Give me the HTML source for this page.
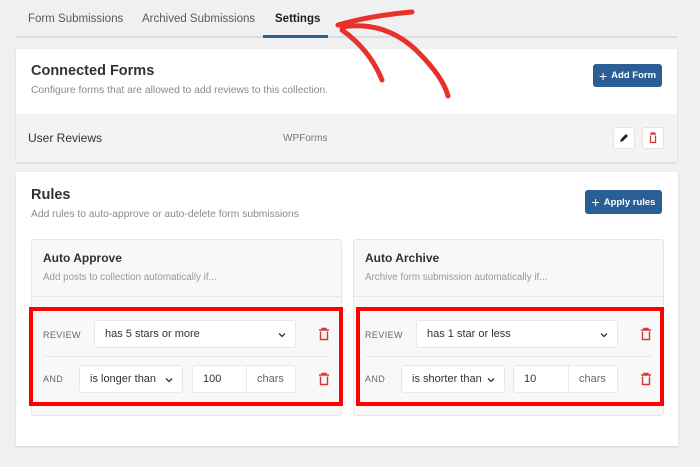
<!DOCTYPE html><html><head><style>
*{box-sizing:border-box;margin:0;padding:0}
body{width:700px;height:467px;background:#f0f0f1;font-family:"Liberation Sans",sans-serif;position:relative;overflow:hidden;color:#1e1e1e}
.a{position:absolute}
.tab{position:absolute;top:13px;font-size:11.5px;color:#5a5a5a}
.card{position:absolute;background:#fff;box-shadow:0 1px 2px rgba(0,0,0,.12)}
.h{font-size:14.5px;font-weight:bold;color:#2c3338}
.s{font-size:10.3px;color:#8a8a8a}
.btn{position:absolute;background:#2a5f95;color:#fff;font-size:9.5px;font-weight:bold;border-radius:3px;display:flex;align-items:center;justify-content:center;gap:4px}
.box{position:absolute;background:#f8f8f9;border:1px solid #e6e6e8;border-radius:3px}
.red{position:absolute;border:4px solid #f00}
.sel{position:absolute;background:#fff;border:1px solid #e8e8ea;border-radius:3px;font-size:11px;color:#333;display:flex;align-items:center;padding-left:10px}
.lbl{position:absolute;font-size:9px;color:#666;letter-spacing:.4px}
.chev{position:absolute;right:8px;top:9px}
.tr{position:absolute}
</style></head><body>
<div class="tab" style="left:28px">Form Submissions</div>
<div class="tab" style="left:142px">Archived Submissions</div>
<div class="tab" style="left:275px;color:#1e1e1e;font-weight:bold">Settings</div>
<div class="a" style="left:16px;top:36px;width:661px;height:2px;background:#dcdcde"></div>
<div class="a" style="left:263px;top:35px;width:65px;height:3px;background:#2a5f95"></div>

<div class="card" style="left:16px;top:49px;width:661px;height:113px">
 <div class="a h" style="left:15px;top:14px">Connected Forms</div>
 <div class="a s" style="left:15px;top:36px">Configure forms that are allowed to add reviews to this collection.</div>
 <div class="btn" style="left:577px;top:15px;width:69px;height:23px"><span style="font-size:14px;font-weight:normal">+</span>Add Form</div>
 <div class="a" style="left:0;top:65px;width:661px;height:48px;background:#f3f3f4"></div>
 <div class="a" style="left:12px;top:82px;font-size:12px;color:#2c3338">User Reviews</div>
 <div class="a" style="left:267px;top:84px;font-size:10px;color:#777">WPForms</div>
 <div class="a" style="left:597px;top:78px;width:22px;height:22px;background:#fff;border:1px solid #e5e5e5;border-radius:3px"><svg width="20" height="20" viewBox="0 0 20 20"><path d="M6 14l1-3 5-5 2 2-5 5z" fill="#222"/></svg></div>
 <div class="a" style="left:626px;top:78px;width:22px;height:22px;background:#fff;border:1px solid #f0dede;border-radius:3px"><svg width="20" height="20" viewBox="0 0 20 20"><path d="M7 6h6M8.5 6V5h3v1M7.5 7.5v7h5v-7" stroke="#d63638" stroke-width="1.3" fill="none"/></svg></div>
</div>

<div class="card" style="left:16px;top:172px;width:662px;height:274px">
 <div class="a h" style="left:15px;top:15px">Rules</div>
 <div class="a s" style="left:15px;top:37px">Add rules to auto-approve or auto-delete form submissions</div>
 <div class="btn" style="left:569px;top:18px;width:77px;height:24px"><span style="font-size:14px;font-weight:normal">+</span>Apply rules</div>
</div>

<div class="box" style="left:31px;top:239px;width:311px;height:177px"></div>
<div class="a" style="left:32px;top:296px;width:309px;height:1px;background:#e8e8ea"></div>
<div class="a" style="left:43px;top:251px;font-size:12px;font-weight:bold;color:#2c3338">Auto Approve</div>
<div class="a" style="left:43px;top:272px;font-size:9.8px;color:#999">Add posts to collection automatically if...</div>

<div class="box" style="left:353px;top:239px;width:311px;height:177px"></div>
<div class="a" style="left:354px;top:296px;width:309px;height:1px;background:#e8e8ea"></div>
<div class="a" style="left:365px;top:251px;font-size:12px;font-weight:bold;color:#2c3338">Auto Archive</div>
<div class="a" style="left:365px;top:272px;font-size:9.8px;color:#999">Archive form submission automatically if...</div>

<div class="a" style="left:43px;top:356px;width:287px;height:1px;background:#e8e8ea"></div>
<div class="a" style="left:365px;top:356px;width:287px;height:1px;background:#e8e8ea"></div>

<div class="lbl" style="left:43px;top:330px">REVIEW</div>
<div class="sel" style="left:94px;top:320px;width:202px;height:28px">has 5 stars or more<svg class="chev" width="10" height="10" viewBox="0 0 10 10"><path d="M2 3.5l3 3 3-3" stroke="#333" stroke-width="1.3" fill="none"/></svg></div>
<div class="lbl" style="left:43px;top:374px">AND</div>
<div class="sel" style="left:79px;top:365px;width:104px;height:28px">is longer than<svg class="chev" width="10" height="10" viewBox="0 0 10 10"><path d="M2 3.5l3 3 3-3" stroke="#333" stroke-width="1.3" fill="none"/></svg></div>
<div class="sel" style="left:192px;top:365px;width:55px;height:28px;border-radius:3px 0 0 3px">100</div>
<div class="sel" style="left:246px;top:365px;width:50px;height:28px;border-radius:0 3px 3px 0;color:#666">chars</div>

<div class="lbl" style="left:365px;top:330px">REVIEW</div>
<div class="sel" style="left:416px;top:320px;width:202px;height:28px">has 1 star or less<svg class="chev" width="10" height="10" viewBox="0 0 10 10"><path d="M2 3.5l3 3 3-3" stroke="#333" stroke-width="1.3" fill="none"/></svg></div>
<div class="lbl" style="left:365px;top:374px">AND</div>
<div class="sel" style="left:401px;top:365px;width:104px;height:28px">is shorter than<svg class="chev" width="10" height="10" viewBox="0 0 10 10"><path d="M2 3.5l3 3 3-3" stroke="#333" stroke-width="1.3" fill="none"/></svg></div>
<div class="sel" style="left:513px;top:365px;width:56px;height:28px;border-radius:3px 0 0 3px">10</div>
<div class="sel" style="left:568px;top:365px;width:50px;height:28px;border-radius:0 3px 3px 0;color:#666">chars</div>

<svg class="tr" style="left:316px;top:326px" width="16" height="16" viewBox="0 0 16 16"><path d="M3 4h10M6 4V2.5h4V4M4.5 5.5v8h7v-8" stroke="#d63638" stroke-width="1.4" fill="none"/></svg>
<svg class="tr" style="left:316px;top:371px" width="16" height="16" viewBox="0 0 16 16"><path d="M3 4h10M6 4V2.5h4V4M4.5 5.5v8h7v-8" stroke="#d63638" stroke-width="1.4" fill="none"/></svg>
<svg class="tr" style="left:638px;top:326px" width="16" height="16" viewBox="0 0 16 16"><path d="M3 4h10M6 4V2.5h4V4M4.5 5.5v8h7v-8" stroke="#d63638" stroke-width="1.4" fill="none"/></svg>
<svg class="tr" style="left:638px;top:371px" width="16" height="16" viewBox="0 0 16 16"><path d="M3 4h10M6 4V2.5h4V4M4.5 5.5v8h7v-8" stroke="#d63638" stroke-width="1.4" fill="none"/></svg>

<div class="red" style="left:29px;top:307px;width:314px;height:99px"></div>
<div class="red" style="left:356px;top:307px;width:308px;height:99px"></div>

<svg class="a" style="left:0;top:0" width="700" height="140" viewBox="0 0 700 140">
<path d="M338 25 C362 18 388 14 412 12" stroke="#e8312a" stroke-width="5" fill="none" stroke-linecap="round"/>
<path d="M342 30 C356 40 372 55 382 80" stroke="#e8312a" stroke-width="5" fill="none" stroke-linecap="round"/>
<path d="M342 27 C372 22 398 32 418 52 C436 70 445 84 448 96" stroke="#e8312a" stroke-width="5" fill="none" stroke-linecap="round"/>
</svg>
</body></html>
